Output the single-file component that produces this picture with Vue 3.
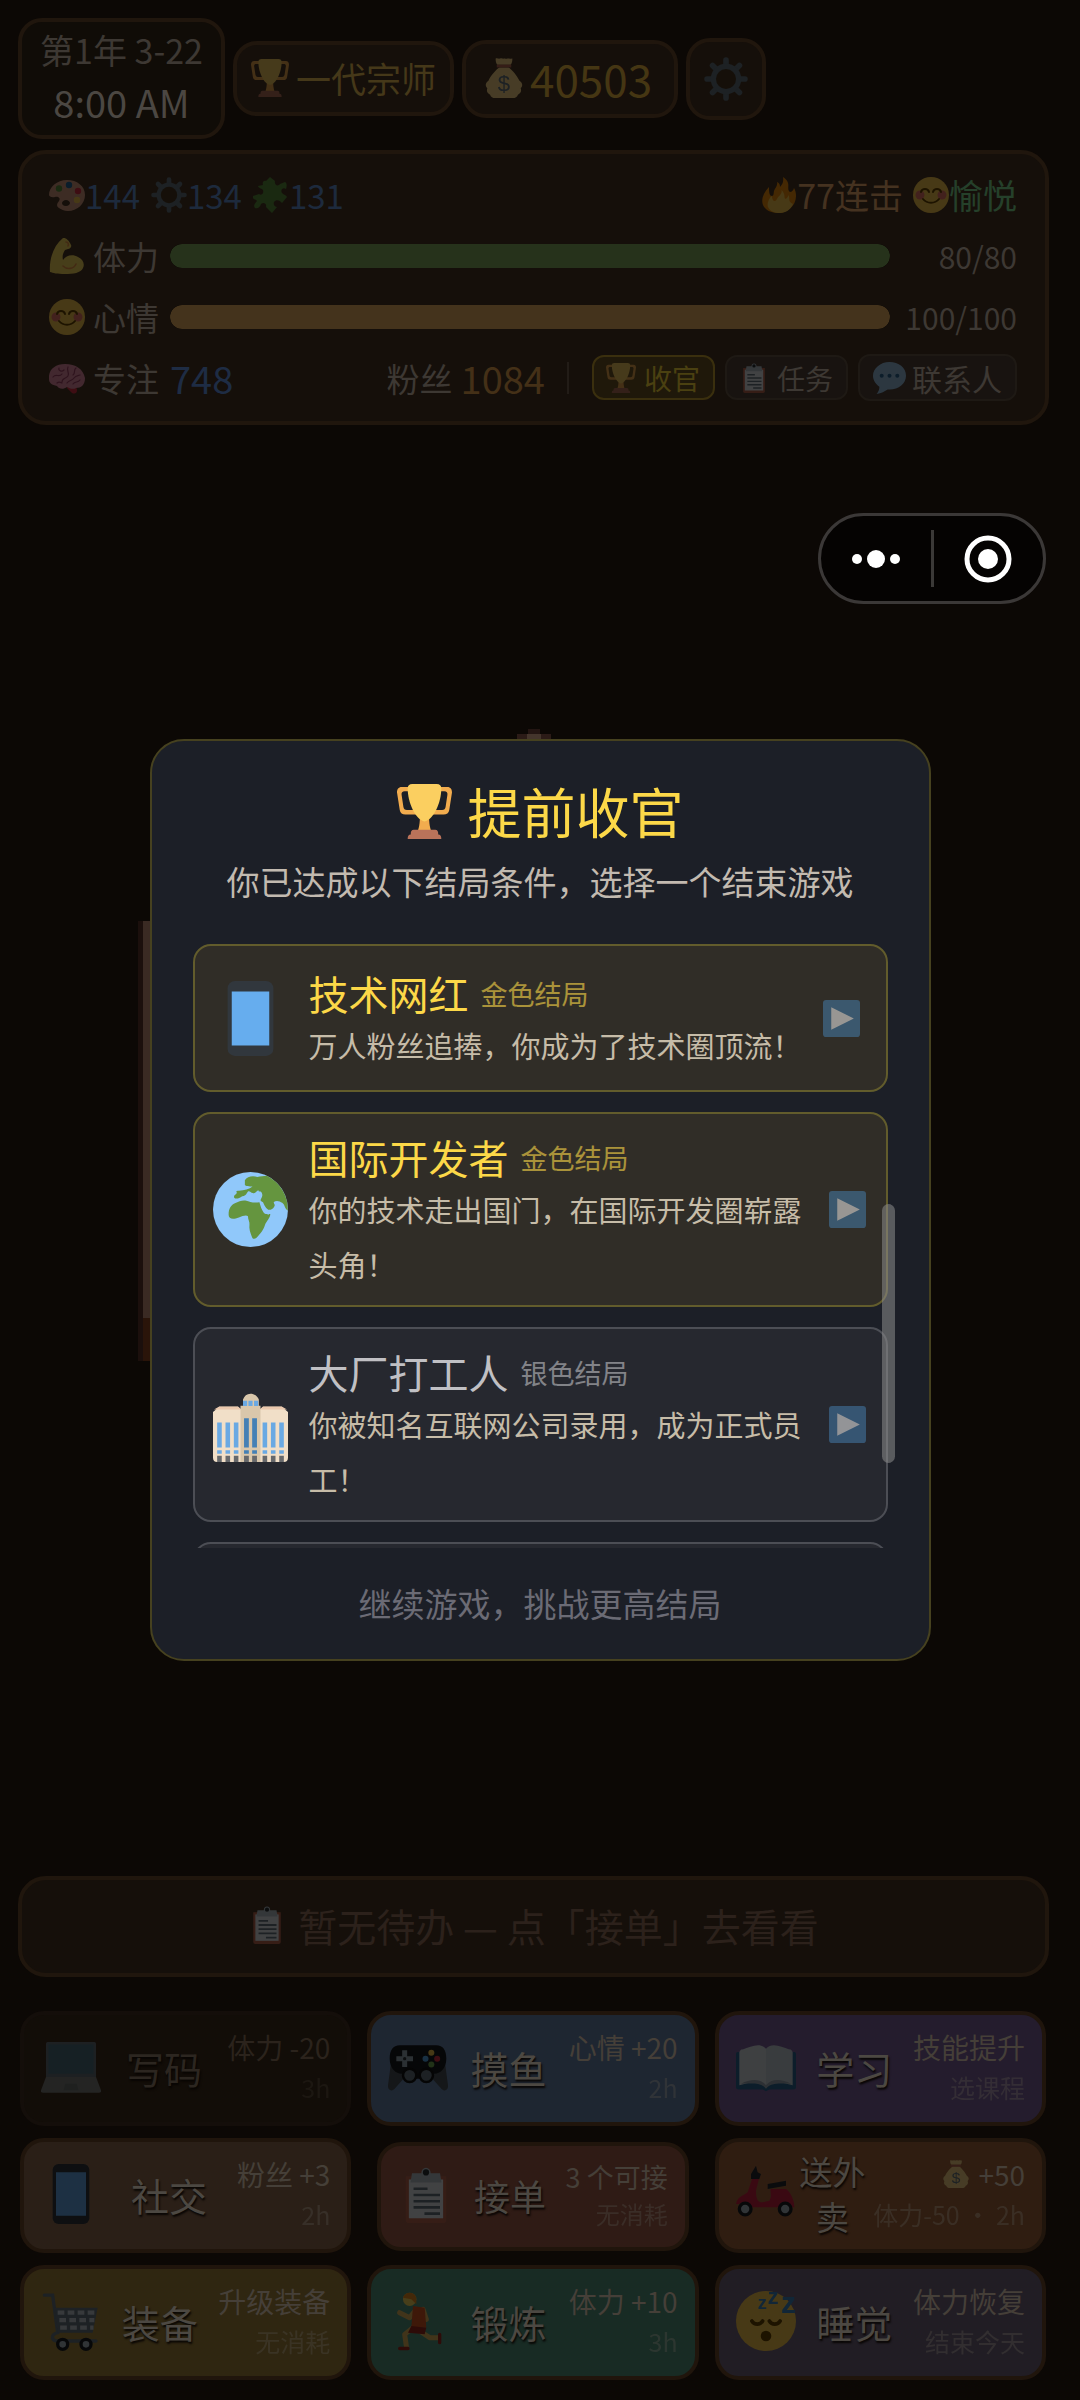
<script setup>
const skills = [
  { icon: 'palette', value: 144 },
  { icon: 'gear', value: 134 },
  { icon: 'puzzle', value: 131 },
]

const bars = [
  { icon: 'arm', label: '体力', value: 80, max: 80, tone: 'green' },
  { icon: 'smile', label: '心情', value: 100, max: 100, tone: 'amber' },
]

const actions = [
  { icon: 'laptop', name: '写码', gain: '体力 -20', cost: '3h', tone: 'disabled' },
  { icon: 'gamepad', name: '摸鱼', gain: '心情 +20', cost: '2h', tone: 'blue' },
  { icon: 'book', name: '学习', gain: '技能提升', cost: '选课程', tone: 'purple' },
  { icon: 'phone', name: '社交', gain: '粉丝 +3', cost: '2h', tone: 'brown' },
  { icon: 'clipboard', name: '接单', gain: '3 个可接', cost: '无消耗', tone: 'red' },
  { icon: 'scooter', name: '送外卖', gain: '+50', gainIcon: 'money', cost: '体力-50 · 2h', tone: 'orange' },
  { icon: 'cart', name: '装备', gain: '升级装备', cost: '无消耗', tone: 'gold' },
  { icon: 'runner', name: '锻炼', gain: '体力 +10', cost: '3h', tone: 'teal' },
  { icon: 'sleep', name: '睡觉', gain: '体力恢复', cost: '结束今天', tone: 'night' },
]

const endings = [
  { icon: 'phone', name: '技术网红', tag: '金色结局', desc: '万人粉丝追捧，你成为了技术圈顶流！', tier: 'gold' },
  { icon: 'globe', name: '国际开发者', tag: '金色结局', desc: '你的技术走出国门，在国际开发圈崭露头角！', tier: 'gold' },
  { icon: 'building', name: '大厂打工人', tag: '银色结局', desc: '你被知名互联网公司录用，成为正式员工！', tier: 'silver' },
]
</script>

<template>
  <svg class="sprite" aria-hidden="true">
    <symbol id="trophy" viewBox="0 0 36 36">
      <path fill="#F2AC4E" d="M9 2H3C1 2 0 3.500 0 5.500L1.800 17c.3 2 1.700 3 3.700 3H14v-3H6.500c-1.500 0-2-.8-2.300-2L3 7c-.2-1.500.5-2.300 2-2.300h4zM27 2h6c2 0 3 1.500 3 3.500L34.200 17c-.3 2-1.700 3-3.700 3H22v-3h7.500c1.500 0 2-.8 2.300-2L33 7c.2-1.500-.5-2.300-2-2.300h-4zM21 22l-6-.500C15 28 13.500 31 13.500 31h9S21 28 21 22z" />
      <path fill="#FBCF60" d="M29 3c0 9-5 20.500-11 21.500C12 23.500 7 12 7 3c0-2 1-3 3-3h16c2 0 3 1 3 3z" />
      <path fill="#BA735A" d="M27 33c0-2-.5-3-2-3H11c-1.500 0-2 1-2 3-1.500 0-2 1-2 3h22c0-2-.5-3-2-3z" />
    </symbol>
    <symbol id="money" viewBox="0 0 36 36">
      <path fill="#FDD888" d="M31.900 20.400C30 16.500 25 10 22 8.500h-8C11 10 6 16 4 20.400c-3 2-3 5-1 6.600-1 3 0 5 2.500 6C6 35 8 36 10 36h16c2 0 4-1 4.500-3 2.500-1 3.500-3 2.500-6 2-1.600 2-4.600-1.100-6.600z" />
      <path fill="#FDD888" d="M12 6c-1.500-1.500-1.500-4-1.500-5.500C12-.2 13 1 14.500.5 16-.3 17 1 18 .5c1-.5 2 .5 3.500 0C23 0 24 1 25.500.5 25.500 2 25.500 4.500 24 6z" />
      <path fill="#BF6952" d="M11.500 6h13v2.500h-13z" />
      <text x="18" y="30" text-anchor="middle" font-family="Liberation Sans, sans-serif" font-size="20" fill="#67757F">$</text>
    </symbol>
    <symbol id="gear" viewBox="0 0 36 36">
      <g stroke="#66757F" stroke-width="4.600" stroke-linecap="round">
        <path d="M18 2.500v31M2.500 18h31M7 7l22 22M29 7L7 29" />
      </g>
      <circle cx="18" cy="18" r="12.500" fill="#66757F" />
      <circle cx="18" cy="18" r="8.200" fill="#4a3620" />
    </symbol>
    <symbol id="palette" viewBox="0 0 36 36">
      <path fill="#D99E82" d="M18 3C8 3 0 10 0 18c0 1.500 3 3 6 2 3-.8 6 1 4 4-2 2.500-3 5 0 7 2 1.500 5 3 9 3 9 0 17-7 17-16S28 3 18 3zm-1 26c-3 0-4-1.500-4-3s2-3 4-3 4 1.500 4 3-1.500 3-4 3z" />
      <circle cx="10" cy="11.500" r="3.200" fill="#5C913B" /><circle cx="20" cy="8" r="3.200" fill="#226699" />
      <circle cx="29" cy="14" r="3.200" fill="#DD2E44" /><circle cx="28" cy="23" r="3.200" fill="#FFCC4D" />
    </symbol>
    <symbol id="puzzle" viewBox="0 0 36 36">
      <path fill="#5C913B" d="M10 8c-1-3 1-5 3-4l4-4 5 4c-1 4 3 6 5 3l5-2c2 1 2 4 1 7-3-2-6 1-4 4 2 2 4 2 5 4l-5 6c-2-3-6-4-8-1-1 3 1 5 3 5l-5 6-6-6c1-4-3-5-5-3-1 3-3 5-6 4-2-2 0-5 2-7-1-2-5-1-4-5l6-2c3 2 5-1 4-4-1-2-4-1-5-4z" />
    </symbol>
    <symbol id="flame" viewBox="0 0 36 36">
      <path fill="#F4900C" d="M35 19c0-3-.6-6-2-8-.5 2-2 4-4 4-3-2-1-6-2-9-.5-2-2-4-5-6 1 5-1 8-3 10 0-3-1-4-3-5 1 4-2 6-3 9-.5 2 0 5-2 5-2.500 0-3-3-3-9-6 6-8 13-6 18 2 5 8 8 16 8s17-7 17-17z" />
      <path fill="#FFCC4D" d="M28.500 24c-.5-2 0-4-1-6-1 4-4 5-4 2 0-3-1-5-3-7 1 4-3 6-4 8-1 1-1 3-3 3s-2-3-3-5C7 23 6 27 7 30c2 4 6 6 12 6s11-4 13-9c-1-1-2.500-1-3.500-3z" />
    </symbol>
    <symbol id="arm" viewBox="0 0 36 36">
      <path fill="#FFDC5D" d="M14 0c3-1 7 4 8 7 1 2-1 4-3 4l-3 1c-2 3-3 6-2 10 3-5 10-6 15-3 5 2 7 7 5 11-2 5-10 6-18 6C8 36 4 35 1 34 0 22 4 8 14 0z" />
      <path fill="none" stroke="#EF9645" stroke-width="1.600" stroke-linecap="round" d="M14 28c4 4 11 3 13-2M17 4c2 0 3 2 2 4" />
    </symbol>
    <symbol id="smile" viewBox="0 0 36 36">
      <circle cx="18" cy="18" r="18" fill="#FFCC4D" />
      <circle cx="7" cy="18" r="4.500" fill="#E75A70" opacity=".75" /><circle cx="29" cy="18" r="4.500" fill="#E75A70" opacity=".75" />
      <path fill="none" stroke="#664500" stroke-width="2" stroke-linecap="round" d="M8 15c1-4 7-4 8 0M20 15c1-4 7-4 8 0M10 22c4 5 12 5 16 0" />
    </symbol>
    <symbol id="brain" viewBox="0 0 36 36">
      <path fill="#DD2E44" d="M19 25c4 0 9 1 9 5s-3 4-5 3l-5-5z" />
      <path fill="#EA8FA8" d="M0 19C-1 10 6 4 16 4c11 0 18 5 20 14 0 7-4 10-9 10-3 2-7 0-9-1-4 3-8 2-10-1-5-1-8-3-8-7z" />
      <path fill="none" stroke="#A64468" stroke-width="1.200" stroke-linecap="round" d="M4 17c3-4 6 1 9-3M10 8c-1 3 3 4 5 2M19 7c-2 4 2 6 0 9s-6 2-6 6M27 8c-3 2 0 5-3 7M31 15c-2 1-4 0-6 3s-5 2-7 5M8 23c2-2 3-1 5 0M24 24c2-3 5-1 7-4" />
    </symbol>
    <symbol id="clipboard" viewBox="0 0 36 36">
      <path fill="#C1694F" d="M5 6h26v28q0 2-2 2H7q-2 0-2-2z" />
      <path fill="#E8EDF1" d="M7 8h22v25H7z" />
      <path fill="#B9C4CC" d="M9 4h6a3 3.500 0 0 1 6 0h6l1 6H8z" />
      <circle cx="18" cy="3.500" r="2" fill="#292F33" />
      <path stroke="#66757F" stroke-width="1.700" d="M10 14h9M10 18h17M10 22h17M10 26h17M17 30h10" />
    </symbol>
    <symbol id="bubble" viewBox="0 0 36 36">
      <path fill="#9CC5E6" d="M18 1C8 1 0 8 0 16c0 5 3 9 7 12 0 3-1 5-3 8 5-1 9-3 12-5 11 1 20-6 20-15S28 1 18 1z" />
      <circle cx="9.500" cy="16" r="2.200" fill="#2A6797" /><circle cx="18" cy="16" r="2.200" fill="#2A6797" /><circle cx="26.500" cy="16" r="2.200" fill="#2A6797" />
    </symbol>
    <symbol id="phone" viewBox="0 0 36 36">
      <rect x="7" width="22" height="36" rx="3.500" fill="#31373D" />
      <path fill="#66ADEE" d="M9 5h18v26H9z" />
    </symbol>
    <symbol id="globe" viewBox="0 0 36 36">
      <circle cx="18" cy="18" r="18" fill="#90C8FA" />
      <g fill="#65953F">
        <path d="M7.500 20.500c0-3 1-4.500 3-5.500s4-1.700 5.500-1.200 3.500 1.200 6.300.7c.7 2.500 1.500 5 3 5.700h2.200c0 2-2 3.500-2.600 5.400-.5 2-2.500 4.500-4 6-1 .8-1.900.6-2.200-.4-.8-2-1.500-4-1.200-6 .2-1.500-.8-2.500-.7-4-.8-.8-2.500-.2-4.400.6-2.500 1-4.900 1-4.900-1.300z" />
        <path d="M15.300 4c1-2 4-2.300 6-1.600 1.500-.5 3-.3 4.500-.6A18 18 0 0 1 35.900 18.600c-1.500-1-1.500-3.100-2.700-3.800-1.200-1-3-1.300-4-.4-.2 1 .8 1 .3 2-.7 1.500-2 1.900-3 1.700-1.500-1-2-2.500-2.500-3.600-.8-.5-1.500-.4-1-1.500.7-1.200.9-2 .4-3-.4-1-1.400 0-1.600-1.200-.8 0-1.500 2-2.700 1.300-1 0-1.500-1.200-2.300-.7-.8.8-.9 2.300-2.800 2.200-1.500 1.200-3.200 1.500-3.800.7-.6-1 1-1.500 1.300-2.300-.5-.6-.5-1 1-1 2.400-.2 5-.7 6.500-2-1.400 0-4-.3-3.700-1z" />
      </g>
      <path fill="none" stroke="#90C8FA" stroke-width="1.200" d="M23.500 15.500c.8 2.500 1.600 4 3.400 4.400" />
    </symbol>
    <symbol id="building" viewBox="0 0 36 36">
      <path fill="#F1DFC8" d="M0 12l3-2.500h9L14 11h8l2-1.500h9l3 2.500v22q0 2-2 2H2q-2 0-2-2z" />
      <path fill="#EBC9AE" d="M3 9.300h9l1.500 1.500h-13zM24 9.300h9l2.500 1.500h-13z" />
      <path fill="#D9C7AB" d="M13.200 9h9.600v27h-9.600zM14.400 9V6c.6-1.700 1.800-2.800 3.600-2.800S21.400 4.300 22 6v3z" />
      <path fill="#6AA9E3" d="M14.400 6.600h2v2.500h-2zM17 6.600h2v2.500h-2zM19.700 6.600h2v2.500h-2zM2 17h2.200v12H2zM6 17h2.200v12H6zM10 17h2.200v12H10zM23.800 17H26v12h-2.200zM27.800 17H30v12h-2.200zM31.800 17H34v12h-2.200zM2 30.300h2.200V32H2zM6 30.300h2.200V32H6zM10 30.300h2.200V32H10zM23.800 30.300H26V32h-2.200zM27.800 30.300H30V32h-2.200zM31.800 30.300H34V32h-2.200z" />
      <path fill="#4480B5" d="M14.900 15h2.300v14h-2.300zM18.800 15h2.300v14h-2.300zM14.900 30.300h2.300V32h-2.300zM18.800 30.300h2.300V32h-2.300z" />
      <path fill="#66686B" d="M2 33h2.200v3H2zM6 33h2.200v3H6zM10 33h2.200v3H10zM14.900 33h2.300v3h-2.300zM18.800 33h2.300v3h-2.300zM23.800 33H26v3h-2.200zM27.800 33H30v3h-2.200zM31.800 33H34v3h-2.200z" />
    </symbol>
    <symbol id="play" viewBox="0 0 36 36">
      <rect width="36" height="36" rx="3" fill="#4783B5" />
      <path fill="#fff" d="M8 7l22 11L8 29z" />
    </symbol>
    <symbol id="laptop" viewBox="0 0 36 36">
      <path fill="#99AAB5" d="M3 4q0-1 1-1h28q1 0 1 1v20H3z" />
      <path fill="#74A6BD" d="M4.500 4.500h27V22h-27z" />
      <path fill="#BBBDB8" d="M3 24h30l3 8q.2 1.500-1.500 1.500h-33Q-.2 33.500 0 32z" />
      <path fill="#A5A8A3" d="M14.500 28h7l1 4h-9z" />
    </symbol>
    <symbol id="gamepad" viewBox="0 0 36 36">
      <path fill="#4A5259" d="M2 14L0 29c-.2 3 2 4 4 2l8-9h12l8 9c2 2 4.200 1 4-2l-2-15z" />
      <path fill="#16191c" d="M7 5h22c4 0 6 3 6 8 0 6-4 9-7 9h-4l-4 3h-4l-4-3H8c-3 0-7-3-7-9 0-5 2-8 6-8z" />
      <path stroke="#99AAB5" stroke-width="3" d="M10 8v10M5 13h10" /><circle cx="10" cy="13" r="1" fill="#292F33" />
      <circle cx="13" cy="23" r="4" fill="#66757F" stroke="#111" stroke-width="1.500" /><circle cx="23" cy="23" r="4" fill="#66757F" stroke="#111" stroke-width="1.500" />
      <circle cx="26" cy="9.500" r="1.800" fill="#FFCC4D" /><circle cx="22.500" cy="13" r="1.800" fill="#55ACEE" /><circle cx="29.500" cy="13" r="1.800" fill="#DD2E44" /><circle cx="26" cy="16.500" r="1.800" fill="#77B255" />
    </symbol>
    <symbol id="book" viewBox="0 0 36 36">
      <path fill="#2A6797" d="M0 10q0-1 1-1h34q1 0 1 1v20q0 1.500-1.500 1.500H20l-2 1-2-1H1.500Q0 31.500 0 30z" />
      <path fill="#DDE4E9" d="M2 9q1-2 2-1.500C9 6 14 3 18 7v22c-5-3-10-2-16 0z" />
      <path fill="#CDD6DC" d="M34 9q-1-2-2-1.500C27 6 22 3 18 7v22c5-3 10-2 16 0z" />
      <path fill="#9FADB8" d="M3 28c6-3 12-3 15 1 3-4 9-4 15-1-6 0-12-1-15 3-3-4-9-3-15-3z" />
    </symbol>
    <symbol id="cart" viewBox="0 0 36 36">
      <path fill="none" stroke="#66757F" stroke-width="2" stroke-linecap="round" d="M2 2.500h5L10 25c-4 1-4 4-1 5h24" />
      <path fill="#66757F" d="M8 10h26l-3 15H10z" />
      <path stroke="#C5CDD3" stroke-width="2.500" stroke-dasharray="4 2" d="M10 13h23M11 17.500h21M11.500 22h20" />
      <circle cx="13" cy="32" r="3" fill="#AAB8C2" stroke="#191c1f" stroke-width="2" /><circle cx="27" cy="32" r="3" fill="#AAB8C2" stroke="#191c1f" stroke-width="2" />
    </symbol>
    <symbol id="runner" viewBox="0 0 36 36">
      <g fill="none" stroke="#E9B95D" stroke-width="3" stroke-linecap="round" stroke-linejoin="round"><path d="M17 11l-4 5-6-3M21 11l2 6M15 22l-5 4 1 7M19 24l6 4h5" /></g>
      <circle cx="13" cy="5" r="4" fill="#FFDC5D" /><path fill="#F19020" d="M9 4c1-4 7-4 8 0v4l-3-3z" />
      <path fill="#DD551F" d="M15 9l7 1 1 12h-9z" /><path fill="#A0281C" d="M14 21l9 1-1 4-10-1z" />
      <path stroke="#A0281C" stroke-width="2" stroke-linecap="round" d="M7 34.500h5M31 26v5" />
    </symbol>
    <symbol id="scooter" viewBox="0 0 36 36">
      <path fill="#CF1F42" d="M10 8l4 0-2 8c0 5 1 7 4 7l4-1c2-3 0-6 1-7h9c3 2 5 7 5 11H9c-3-4-6-2-9-2 1-5 5-5 7-7z" />
      <path fill="#25292d" d="M19 12l11-2v3l-11 2zM9 6l3-5 1 4 2 1-1 3H9z" />
      <circle cx="5.500" cy="27" r="3.500" fill="#AAB8C2" stroke="#191c1f" stroke-width="2" /><circle cx="29.500" cy="27" r="3.500" fill="#AAB8C2" stroke="#191c1f" stroke-width="2" />
    </symbol>
    <symbol id="sleep" viewBox="0 0 36 36">
      <circle cx="18" cy="18" r="18" fill="#FFCC4D" />
      <path fill="none" stroke="#664500" stroke-width="2.200" stroke-linecap="round" d="M9.500 18c1.500 2.500 5 2.500 6.500 0M20 18c1.500 2.500 5 2.500 6.500 0" />
      <circle cx="18" cy="27" r="3.200" fill="#664500" />
      <g font-family="Liberation Sans, sans-serif" font-weight="700" fill="#3B88C3"><text x="13" y="11" font-size="11">z</text><text x="19" y="8" font-size="13">z</text><text x="27" y="13" font-size="18">z</text></g>
    </symbol>
  </svg>

  <main class="game">
    <section class="top">
      <header class="header">
        <div class="box date"><span>第1年 3-22</span><time>8:00 AM</time></div>
        <div class="box rank"><svg class="icon"><use href="#trophy" /></svg>一代宗师</div>
        <div class="box coins"><svg class="icon"><use href="#money" /></svg>40503</div>
        <button class="box settings" type="button" aria-label="设置"><svg class="icon"><use href="#gear" /></svg></button>
      </header>

      <div class="box stats">
        <div class="row">
          <span v-for="s in skills" :key="s.icon" class="skill"><svg class="icon"><use :href="'#' + s.icon" /></svg>{{ s.value }}</span>
          <span class="combo"><svg class="icon"><use href="#flame" /></svg>77连击</span>
          <span class="mood"><svg class="icon"><use href="#smile" /></svg>愉悦</span>
        </div>
        <div v-for="b in bars" :key="b.label" class="row">
          <span class="label"><svg class="icon"><use :href="'#' + b.icon" /></svg>{{ b.label }}</span>
          <div class="track" role="progressbar" :aria-label="b.label" :aria-valuenow="b.value" :aria-valuemax="b.max">
            <div class="fill" :class="b.tone" :style="{ width: (b.value / b.max) * 100 + '%' }"></div>
          </div>
          <span class="amount">{{ b.value }}/{{ b.max }}</span>
        </div>
        <div class="row">
          <span class="label"><svg class="icon"><use href="#brain" /></svg>专注</span>
          <span class="focus">748</span>
          <div class="fans">粉丝<b>1084</b></div>
          <div class="tools">
            <button type="button" class="tool finish"><svg class="icon"><use href="#trophy" /></svg>收官</button>
            <button type="button" class="tool"><svg class="icon"><use href="#clipboard" /></svg>任务</button>
            <button type="button" class="tool contacts"><svg class="icon"><use href="#bubble" /></svg>联系人</button>
          </div>
        </div>
      </div>
    </section>

    <section class="bottom">
      <div class="box todo"><svg class="icon"><use href="#clipboard" /></svg>暂无待办 — 点「接单」去看看</div>
      <div class="actions">
        <button v-for="a in actions" :key="a.name" type="button" class="action" :class="a.tone">
          <svg class="icon"><use :href="'#' + a.icon" /></svg>
          <span class="name">{{ a.name }}</span>
          <span class="meta">
            <span class="gain"><svg v-if="a.gainIcon" class="icon"><use :href="'#' + a.gainIcon" /></svg>{{ a.gain }}</span>
            <span class="cost">{{ a.cost }}</span>
          </span>
        </button>
      </div>
    </section>
  </main>

  <div class="overlay">
    <div class="dialog-wrap">
      <div class="scene-top"></div>
      <div class="scene-side"></div>
      <div class="dialog" role="dialog" aria-labelledby="dialog-title">
        <h1 id="dialog-title"><svg><use href="#trophy" /></svg>提前收官</h1>
        <p class="lead">你已达成以下结局条件，选择一个结束游戏</p>
        <div class="viewport">
          <div class="list">
            <button v-for="e in endings" :key="e.name" type="button" class="ending" :class="e.tier">
              <svg class="emblem"><use :href="'#' + e.icon" /></svg>
              <span class="body">
                <span class="heading"><strong>{{ e.name }}</strong><small>{{ e.tag }}</small></span>
                <span class="desc">{{ e.desc }}</span>
              </span>
              <svg class="play"><use href="#play" /></svg>
            </button>
            <div class="ending silver"></div>
          </div>
          <div class="scrollbar"></div>
        </div>
        <button type="button" class="continue">继续游戏，挑战更高结局</button>
      </div>
    </div>
  </div>

  <div class="capsule">
    <button type="button" aria-label="更多"><svg viewBox="0 0 48 48"><circle cx="5" cy="24" r="5" /><circle cx="24" cy="24" r="9" /><circle cx="43" cy="24" r="5" /></svg></button>
    <button type="button" aria-label="关闭"><svg viewBox="0 0 48 48"><circle cx="24" cy="24" r="21" fill="none" stroke="#fff" stroke-width="5" /><circle cx="24" cy="24" r="10" /></svg></button>
  </div>
</template>

<style>
body {
  margin: 0;
  background: #0c0805;
}
</style>

<style scoped>
* {
  box-sizing: border-box;
}
button {
  font: inherit;
  color: inherit;
  padding: 0;
  background: none;
  border: 0;
}
.sprite {
  display: none;
}
.icon {
  flex: none;
  width: 36px;
  height: 36px;
  filter: brightness(0.28);
}
.game,
.overlay {
  font-family: "Noto Sans CJK SC", sans-serif;
}
.game {
  min-height: 100vh;
  display: flex;
  flex-direction: column;
  justify-content: space-between;
  color: #3d3833;
}
.top {
  padding: 18px 31px 0 18px;
}
.box {
  border: 4px solid #20160d;
  border-radius: 24px;
  background: #150f0a;
}
.header {
  display: flex;
  align-items: center;
  gap: 8px;
}
.date {
  width: 207px;
  height: 121px;
  padding-bottom: 6px;
  display: flex;
  flex-direction: column;
  justify-content: center;
  align-items: center;
  font-size: 34px;
  line-height: 52px;
  background: #100c07;
  white-space: nowrap;
}
.date time {
  font-size: 38px;
  color: #4b4742;
}
.rank {
  height: 75px;
  padding: 0 14px 2px;
  display: flex;
  align-items: center;
  gap: 7px;
  font-size: 35px;
  color: #453819;
}
.rank .icon {
  width: 38px;
  height: 38px;
}
.coins {
  height: 78px;
  padding: 0 22px 2px 18px;
  display: flex;
  align-items: center;
  gap: 6px;
  font-size: 44px;
  color: #453613;
}
.coins .icon {
  width: 40px;
  height: 40px;
}
.settings {
  width: 80px;
  height: 82px;
  display: flex;
  align-items: center;
  justify-content: center;
}
.settings .icon {
  width: 44px;
  height: 44px;
}
.stats {
  margin-top: 11px;
  padding: 10px 28px 13px 27px;
  border-radius: 28px;
}
.row {
  height: 61px;
  display: flex;
  align-items: center;
  font-size: 34px;
  white-space: nowrap;
}
.skill,
.combo,
.mood {
  display: flex;
  align-items: center;
}
.skill {
  margin-right: 11px;
  font-size: 33px;
  color: #1d2a3d;
}
.combo {
  margin-left: auto;
  color: #453220;
}
.mood {
  margin-left: 10px;
  color: #25402a;
}
.label {
  width: 121px;
  display: flex;
  align-items: center;
  gap: 8px;
  font-size: 33px;
}
.track {
  flex: 1;
  height: 24px;
  border-radius: 12px;
  background: #0d0a07;
  overflow: hidden;
}
.fill {
  height: 100%;
  border-radius: 12px;
}
.fill.green {
  background: #26321b;
}
.fill.amber {
  background: #44331c;
}
.amount {
  width: 127px;
  text-align: right;
  font-size: 30px;
}
.focus {
  font-size: 38px;
  color: #1e2c44;
}
.fans {
  margin-left: auto;
  padding-right: 22px;
  display: flex;
  align-items: center;
  gap: 8px;
  font-size: 33px;
}
.fans b {
  font-size: 38px;
  font-weight: 400;
  color: #443017;
}
.tools {
  display: flex;
  align-items: center;
  gap: 10px;
}
.tools::before {
  content: "";
  width: 2px;
  height: 32px;
  margin-right: 13px;
  background: #221c17;
}
.tool {
  height: 45px;
  padding: 0 13px 0 12px;
  border: 2px solid #1e1914;
  border-radius: 12px;
  display: flex;
  align-items: center;
  gap: 8px;
  font-size: 28px;
  background: #181310;
}
.tool .icon {
  width: 30px;
  height: 30px;
}
.finish {
  border-color: #3a2f0e;
  background: #1f180a;
  color: #4a4011;
}
.contacts {
  height: 47px;
  font-size: 30px;
  padding: 0 13px;
  gap: 6px;
}
.contacts .icon {
  width: 33px;
  height: 33px;
}
.bottom {
  padding: 0 31px 20px 18px;
}
.todo {
  height: 101px;
  margin-bottom: 34px;
  padding-bottom: 4px;
  border-radius: 28px;
  display: flex;
  align-items: center;
  justify-content: center;
  gap: 12px;
  font-size: 39px;
  color: #2c211b;
}
.todo .icon {
  width: 38px;
  height: 38px;
}
.actions {
  padding: 0 3px 0 2px;
  display: grid;
  grid-template-columns: repeat(3, 1fr);
  grid-auto-rows: 115px;
  gap: 12px 16px;
}
.action {
  min-width: 0;
  padding: 0 17px 3px;
  border: 4px solid #20150c;
  border-radius: 24px;
  display: flex;
  align-items: center;
  color: #4c4842;
}
.action > .icon {
  width: 60px;
  height: 60px;
}
.name {
  flex: 1;
  font-size: 38px;
  line-height: 45px;
  text-align: center;
  text-shadow: 1px 2px 2px #080503;
}
.meta {
  display: flex;
  flex-direction: column;
  align-items: flex-end;
  line-height: 40px;
  white-space: nowrap;
}
.gain {
  display: flex;
  align-items: center;
  gap: 8px;
  font-size: 28px;
  color: #453f38;
}
.gain .icon {
  width: 28px;
  height: 28px;
}
.cost {
  font-size: 25px;
  opacity: 0.4;
}
.disabled {
  background: #120d08;
  border-color: #140e0a;
  color: #2c2620;
}
.disabled .gain {
  color: #2b231c;
}
.disabled .icon {
  filter: brightness(0.19);
}
.blue {
  background: #1e2631;
}
.purple {
  background: #241c2d;
}
.brown {
  background: #2a1f17;
}
.orange {
  background: #2f1d11;
}
.orange .name {
  padding-right: 4px;
  font-size: 33px;
}
.gold {
  background: #2f2611;
}
.teal {
  background: #182b24;
}
.night {
  background: #211d24;
}
.red {
  margin: 4px 10px 2px;
  background: #2f1b15;
}
.red > .icon {
  width: 56px;
  height: 56px;
}
.red .name {
  font-size: 36px;
}
.red .meta {
  line-height: 37px;
}
.red .gain {
  font-size: 27px;
}
.red .cost {
  font-size: 24px;
}
.overlay {
  position: fixed;
  inset: 0;
  display: flex;
  align-items: center;
  justify-content: center;
}
.dialog-wrap {
  position: relative;
  width: 90%;
  max-width: 781px;
}
.scene-top {
  position: absolute;
  top: -10px;
  left: 367px;
  width: 34px;
  height: 10px;
  background: linear-gradient(#231512 0 0) center top / 12px 5px no-repeat, linear-gradient(#44352c 0 0) center bottom / 14px 5px no-repeat, linear-gradient(#2b1b17 0 0) center bottom / 34px 5px no-repeat;
}
.scene-side {
  position: absolute;
  top: 182px;
  left: -12px;
  width: 12px;
  height: 440px;
  border-left: 5px solid #1b0f0c;
  background: linear-gradient(#3a2a23 0 397px, #2a1409 397px);
}
.dialog {
  position: relative;
  padding: 34px 41px 19px;
  border: 2px solid #46411f;
  border-radius: 34px;
  background: #1c1f27;
  text-align: center;
}
h1 {
  margin: 0;
  display: flex;
  align-items: center;
  justify-content: center;
  gap: 16px;
  font-size: 54px;
  line-height: 72px;
  font-weight: 400;
  color: #fcd848;
}
h1 svg {
  width: 55px;
  height: 55px;
}
.lead {
  margin: 8px 0 36px;
  font-size: 33px;
  line-height: 53px;
  color: #c2bab0;
}
.viewport {
  position: relative;
}
.list {
  height: 604px;
  overflow: hidden;
  display: flex;
  flex-direction: column;
  gap: 20px;
}
.ending {
  flex: none;
  width: 100%;
  min-height: 148px;
  padding: 0 20px 0 18px;
  border: 2px solid;
  border-radius: 18px;
  display: flex;
  align-items: center;
  gap: 21px;
  text-align: left;
}
.ending.gold {
  border-color: #625c2c;
  background: #302d27;
  color: #fcd848;
}
.ending.silver {
  border-color: #4c4e55;
  background: #26282f;
  color: #c0c0c4;
}
.emblem {
  flex: none;
  width: 75px;
  height: 75px;
}
.body {
  padding: 19px 0 13px;
}
.heading {
  display: flex;
  align-items: center;
  gap: 12px;
  line-height: 49px;
}
.heading strong {
  font-size: 40px;
  font-weight: 400;
}
.heading small {
  font-size: 27px;
  opacity: 0.6;
}
.desc {
  display: block;
  font-size: 29px;
  line-height: 55px;
  color: #c6bca8;
}
.play {
  flex: none;
  width: 37px;
  height: 37px;
  opacity: 0.5;
}
.scrollbar {
  position: absolute;
  top: 260px;
  right: -7px;
  width: 13px;
  height: 259px;
  border-radius: 7px;
  background: rgba(140, 140, 140, 0.55);
}
.continue {
  display: block;
  width: 100%;
  margin-top: 18px;
  font-size: 33px;
  line-height: 74px;
  color: #6b6b75;
}
.capsule {
  position: fixed;
  top: 513px;
  right: 34px;
  width: 228px;
  height: 91px;
  border: 3px solid #3b3837;
  border-radius: 46px;
  background: #050302;
  display: flex;
  align-items: center;
}
.capsule button {
  flex: 1;
  height: 57px;
  display: flex;
  align-items: center;
  justify-content: center;
}
.capsule button + button {
  border-left: 3px solid #3b3937;
}
.capsule svg {
  width: 48px;
  height: 48px;
  fill: #fff;
}
</style>
